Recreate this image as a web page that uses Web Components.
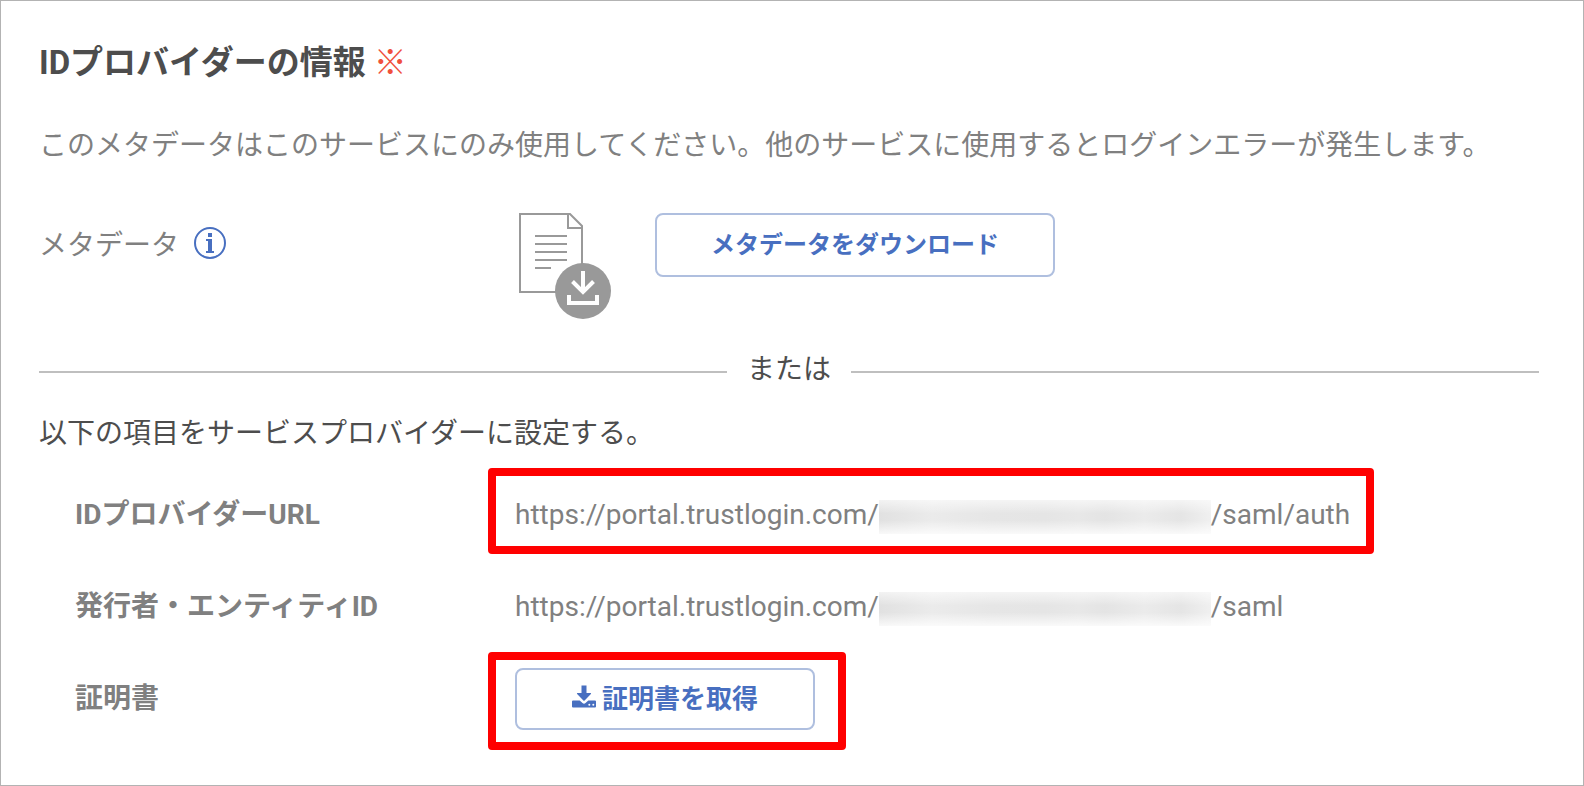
<!DOCTYPE html>
<html lang="ja">
<head>
<meta charset="UTF-8">
<meta name="viewport" content="width=device-width, initial-scale=1">
<title>IDプロバイダーの情報</title>
<style>
    :root {
        --text-dark: #4d4d4d;
        --text-gray: #808080;
        --blue: #486fc0;
        --blue-border: #afbfdf;
        --icon-gray: #999;
        --line: #bfbfbf;
        --mark: #f00;
        --font-mixed: Roboto, "Noto Sans CJK JP", sans-serif;
    }
    * {
        box-sizing: border-box;
    }
    body {
        margin: 0;
        min-height: 100vh;
        display: flex;
        font: 28px/40px "Noto Sans CJK JP", sans-serif;
        color: var(--text-gray);
        background: #fff;
    }
</style>
</head>
<body>
<idp-panel>
    <span slot="title">IDプロバイダーの情報</span>
    <span slot="note">このメタデータはこのサービスにのみ使用してください。他のサービスに使用するとログインエラーが発生します。</span>

    <setting-row>
        <span slot="label">メタデータ</span>
        <info-button slot="label"></info-button>
        <metadata-icon></metadata-icon>
        <outline-button>メタデータをダウンロード</outline-button>
    </setting-row>

    <or-divider>または</or-divider>

    <span slot="lead">以下の項目をサービスプロバイダーに設定する。</span>

    <setting-row slot="items" nested>
        <span slot="label">IDプロバイダーURL</span>
        <marked-area><masked-url base="https://portal.trustlogin.com/" path="/saml/auth"></masked-url></marked-area>
    </setting-row>
    <setting-row slot="items" nested>
        <span slot="label">発行者・エンティティID</span>
        <masked-url base="https://portal.trustlogin.com/" path="/saml"></masked-url>
    </setting-row>
    <setting-row slot="items" nested>
        <span slot="label">証明書</span>
        <marked-area wide><outline-button icon>証明書を取得</outline-button></marked-area>
    </setting-row>
</idp-panel>

<script>
// Whole panel: heading, note, metadata row, divider and the list of items
class IdpPanel extends HTMLElement {
    constructor() {
        super();
        this.attachShadow({ mode: 'open' });
        this.shadowRoot.innerHTML = `
            <style>
                :host {
                    display: block;
                    box-sizing: border-box;
                    flex: 1;
                    padding: 38px 44px 20px 38px;
                    border: 1px solid #b3b3b3;
                }
                h2 {
                    display: flex;
                    gap: 8px;
                    margin: 0;
                    font-family: var(--font-mixed);
                    font-size: 33px;
                    line-height: 48px;
                    color: var(--text-dark);
                }
                .required {
                    font-weight: 400;
                    color: #f0503c;
                }
                p {
                    margin: 0;
                }
                .note {
                    margin: 36px 0 50px;
                }
                .lead {
                    margin: 24px 0 18px;
                    color: var(--text-dark);
                }
            </style>
            <h2><slot name="title"></slot><span class="required">※</span></h2>
            <p class="note"><slot name="note"></slot></p>
            <slot></slot>
            <p class="lead"><slot name="lead"></slot></p>
            <slot name="items"></slot>
        `;
    }
}

// Label on the left, value on the right
class SettingRow extends HTMLElement {
    constructor() {
        super();
        this.attachShadow({ mode: 'open' });
        this.shadowRoot.innerHTML = `
            <style>
                :host {
                    display: grid;
                    grid-template-columns: 480px 1fr;
                    align-items: start;
                }
                :host([nested]) {
                    grid-template-columns: 440px 1fr;
                    align-items: center;
                    min-height: 92px;
                    padding-left: 36px;
                }
                .label {
                    display: flex;
                    align-items: center;
                    gap: 15px;
                    min-height: 60px;
                }
                :host([nested]) .label {
                    font-family: var(--font-mixed);
                    font-weight: 700;
                }
                .value {
                    display: flex;
                    align-items: flex-start;
                    gap: 44px;
                }
            </style>
            <div class="label"><slot name="label"></slot></div>
            <div class="value"><slot></slot></div>
        `;
    }
}

// Round "i" button
class InfoButton extends HTMLElement {
    constructor() {
        super();
        this.attachShadow({ mode: 'open' });
        this.shadowRoot.innerHTML = `
            <style>
                :host {
                    display: block;
                }
                button {
                    display: block;
                    padding: 0;
                    border: 0;
                    background: none;
                    color: var(--blue);
                    cursor: pointer;
                }
                svg {
                    display: block;
                }
            </style>
            <button type="button" aria-label="メタデータの説明">
                <svg width="32" height="32" viewBox="0 0 32 32">
                    <circle cx="16" cy="16" r="15" fill="none" stroke="currentColor" stroke-width="2"/>
                    <path d="M14 6h4v4h-4zM12 12h6v12h2v2h-8v-2h2V14h-2z" fill="currentColor"/>
                </svg>
            </button>
        `;
    }
}

// Document sheet with a download badge
class MetadataIcon extends HTMLElement {
    constructor() {
        super();
        this.attachShadow({ mode: 'open' });
        this.shadowRoot.innerHTML = `
            <style>
                :host {
                    display: block;
                    color: var(--icon-gray);
                }
                svg {
                    display: block;
                }
            </style>
            <svg width="92" height="106" viewBox="0 0 92 106" fill="none" stroke="currentColor" stroke-width="2" aria-hidden="true">
                <path d="M63 52V13L51 1H1v78h38M49 1v14h14"/>
                <path d="M16 23h32M16 31h32M16 39h32M16 47h32M16 55h16"/>
                <circle cx="64" cy="78" r="28" fill="currentColor" stroke="none"/>
                <path d="M64 58v20M53.500 68.500l10.500 10.500l10.500-10.500" stroke="#fff" stroke-width="4"/>
                <path d="M50 82v8h28v-8" stroke="#fff" stroke-width="4"/>
            </svg>
        `;
    }
}

class OutlineButton extends HTMLElement {
    constructor() {
        super();
        this.attachShadow({ mode: 'open' });
        const icon = this.hasAttribute('icon') ? `
            <svg width="24" height="24" viewBox="0 0 24 24" fill="currentColor" aria-hidden="true">
                <path d="M9.500 0.500h5v7.500h4q1 0.200 0.400 1l-6.300 6.500q-0.600 0.500-1.200 0L5.100 9q-0.600-0.800 0.400-1h4z"/>
                <path d="M1 15.500h6.700l2.800 2.600q1.500 1.200 3 0l2.800-2.600H23q1 0 1 1v5q0 1-1 1H1q-1 0-1-1v-5q0-1 1-1z"/>
                <circle cx="17.300" cy="19.700" r="1" fill="#fff"/>
                <circle cx="21.300" cy="19.700" r="1" fill="#fff"/>
            </svg>` : '';
        this.shadowRoot.innerHTML = `
            <style>
                :host {
                    display: block;
                }
                button {
                    display: flex;
                    align-items: center;
                    justify-content: center;
                    gap: 6px;
                    box-sizing: border-box;
                    min-width: 400px;
                    height: 64px;
                    padding: 0 24px;
                    border: 2px solid var(--blue-border);
                    border-radius: 8px;
                    background: #fff;
                    color: var(--blue);
                    font: 700 24px/40px var(--font-mixed);
                    cursor: pointer;
                }
                :host([icon]) button {
                    min-width: 300px;
                    height: 62px;
                    font-size: 26px;
                }
                svg {
                    margin-bottom: 4px;
                }
            </style>
            <button type="button">${icon}<slot></slot></button>
        `;
    }
}

// Text with a rule on both sides
class OrDivider extends HTMLElement {
    constructor() {
        super();
        this.attachShadow({ mode: 'open' });
        this.shadowRoot.innerHTML = `
            <style>
                :host {
                    display: flex;
                    align-items: flex-end;
                    gap: 20px;
                    margin-top: 28px;
                    color: var(--text-dark);
                }
                .line {
                    flex: 1;
                    height: 2px;
                    margin-bottom: 14px;
                    background: var(--line);
                }
            </style>
            <span class="line"></span>
            <slot></slot>
            <span class="line"></span>
        `;
    }
}

// URL whose tenant part is hidden
class MaskedUrl extends HTMLElement {
    constructor() {
        super();
        this.attachShadow({ mode: 'open' });
        this.shadowRoot.innerHTML = `
            <style>
                :host {
                    display: flex;
                    align-items: center;
                    font-family: var(--font-mixed);
                }
                .mask {
                    width: 332px;
                    height: 34px;
                    margin-top: 4px;
                    background:
                        linear-gradient(#fff9, #fff0 40%, #fff0 60%, #fffc),
                        linear-gradient(90deg, #e1e1e1, #ebebeb 16%, #e6e6e6 34%, #e5e5e5 50%, #e8e8e8 60%, #e4e4e4 68%, #ebebeb 80%, #e5e5e5 91%, #f0f0f0);
                }
            </style>
            <span class="base"></span>
            <span class="mask"></span>
            <span class="path"></span>
        `;
        this.shadowRoot.querySelector('.base').textContent = this.getAttribute('base');
        this.shadowRoot.querySelector('.path').textContent = this.getAttribute('path');
    }
}

// Red frame drawn over the surroundings of its content
class MarkedArea extends HTMLElement {
    constructor() {
        super();
        this.attachShadow({ mode: 'open' });
        this.shadowRoot.innerHTML = `
            <style>
                :host {
                    display: block;
                    position: relative;
                }
                .frame {
                    position: absolute;
                    inset: -27px -24px -19px -27px;
                    border: 8px solid var(--mark);
                    border-radius: 4px;
                    pointer-events: none;
                }
                :host([wide]) .frame {
                    inset: -16px -31px -20px -27px;
                }
            </style>
            <slot></slot>
            <div class="frame"></div>
        `;
    }
}

customElements.define('idp-panel', IdpPanel);
customElements.define('setting-row', SettingRow);
customElements.define('info-button', InfoButton);
customElements.define('metadata-icon', MetadataIcon);
customElements.define('outline-button', OutlineButton);
customElements.define('or-divider', OrDivider);
customElements.define('masked-url', MaskedUrl);
customElements.define('marked-area', MarkedArea);
</script>
</body>
</html>
